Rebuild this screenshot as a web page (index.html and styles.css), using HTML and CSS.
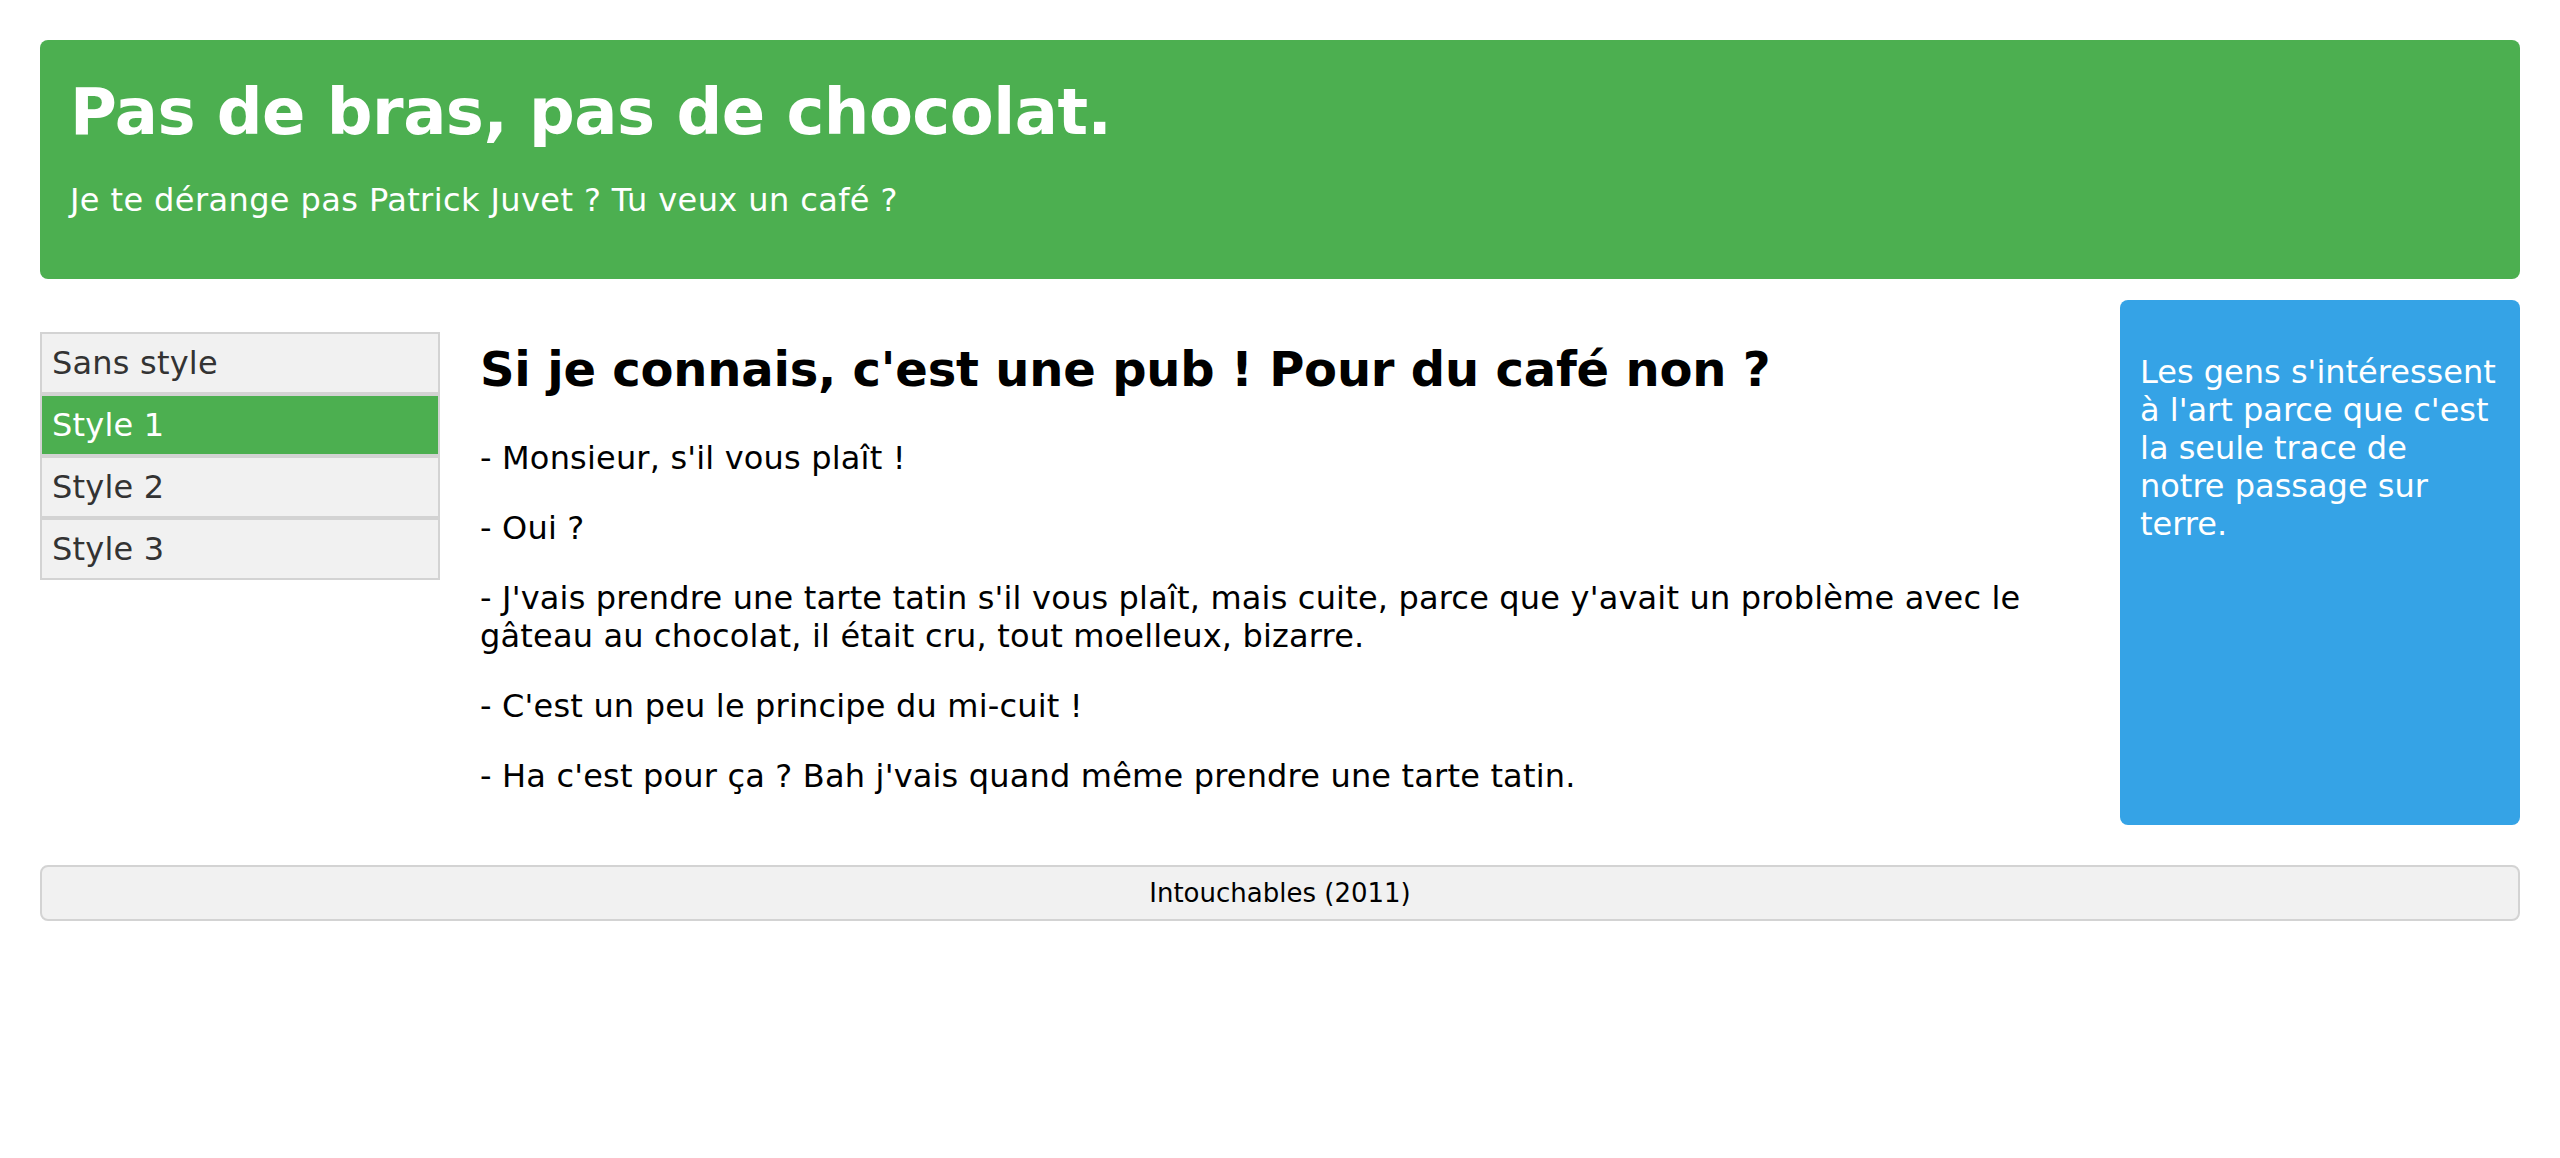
FILE: index.html
```html
<!DOCTYPE html>
<html lang="fr">
<head>
<meta charset="utf-8">
<title>Intouchables</title>
<link rel="stylesheet" href="styles.css">
</head>
<body>
<div class="page">
  <header class="header">
    <h1 class="header-title">Pas de bras, pas de chocolat.</h1>
    <p class="header-sub">Je te dérange pas Patrick Juvet ? Tu veux un café ?</p>
  </header>
  <div class="row">
    <nav class="nav">
      <ul class="menu">
        <li class="menu-item">Sans style</li>
        <li class="menu-item active">Style 1</li>
        <li class="menu-item">Style 2</li>
        <li class="menu-item">Style 3</li>
      </ul>
    </nav>
    <main class="main">
      <h2 class="main-title">Si je connais, c'est une pub ! Pour du café non ?</h2>
      <p class="para">- Monsieur, s'il vous plaît !</p>
      <p class="para">- Oui ?</p>
      <p class="para">- J'vais prendre une tarte tatin s'il vous plaît, mais cuite, parce que y'avait un problème avec le gâteau au chocolat, il était cru, tout moelleux, bizarre.</p>
      <p class="para">- C'est un peu le principe du mi-cuit !</p>
      <p class="para">- Ha c'est pour ça ? Bah j'vais quand même prendre une tarte tatin.</p>
    </main>
    <aside class="aside">
      <p class="aside-text">Les gens s'intéressent à l'art parce que c'est la seule trace de notre passage sur terre.</p>
    </aside>
  </div>
  <footer class="footer">Intouchables (2011)</footer>
</div>
</body>
</html>
```

FILE: styles.css
```css
html, body {
  margin: 0;
  padding: 0;
  background: #ffffff;
}

body {
  font-family: "DejaVu Sans", Verdana, sans-serif;
  font-size: 32px;
  color: #000000;
}

.page {
  padding: 40px 40px;
}

.header {
  background: #4caf50;
  color: #ffffff;
  border-radius: 8px;
  padding: 35px 30px 60px;
}

.header-title {
  margin: 0 0 32px;
  font-size: 64px;
  font-weight: bold;
  letter-spacing: -0.5px;
}

.header-sub {
  margin: 0;
  font-size: 32px;
  letter-spacing: 0.4px;
}

.row {
  display: flex;
  align-items: stretch;
  gap: 40px;
  margin-top: 21px;
}

.nav {
  flex: 0 0 400px;
}

.menu {
  list-style: none;
  margin: 32px 0 0;
  padding: 0;
}

.menu-item {
  border: 2px solid #d3d3d3;
  background: #f1f1f1;
  color: #333333;
  padding: 10px 10px;
  line-height: 38px;
  letter-spacing: 0.2px;
}

.menu-item.active {
  background: #4caf50;
  color: #ffffff;
}

.main {
  flex: 1 1 auto;
  min-width: 0;
}

.main-title {
  font-size: 48px;
  font-weight: bold;
  margin: 41px 0 42px;
  letter-spacing: -0.2px;
}

.para {
  margin: 32px 0;
  letter-spacing: 0.18px;
}

.para:last-child {
  margin-bottom: 30px;
}

.aside {
  flex: 0 0 400px;
  box-sizing: border-box;
  background: #35a3e6;
  color: #ffffff;
  border-radius: 8px;
  padding: 20px;
}

.aside-text {
  margin: 33px 0;
}

.footer {
  margin-top: 40px;
  background: #f1f1f1;
  border: 2px solid #d3d3d3;
  border-radius: 8px;
  text-align: center;
  font-size: 26px;
  padding: 11px 10px;
}
```
